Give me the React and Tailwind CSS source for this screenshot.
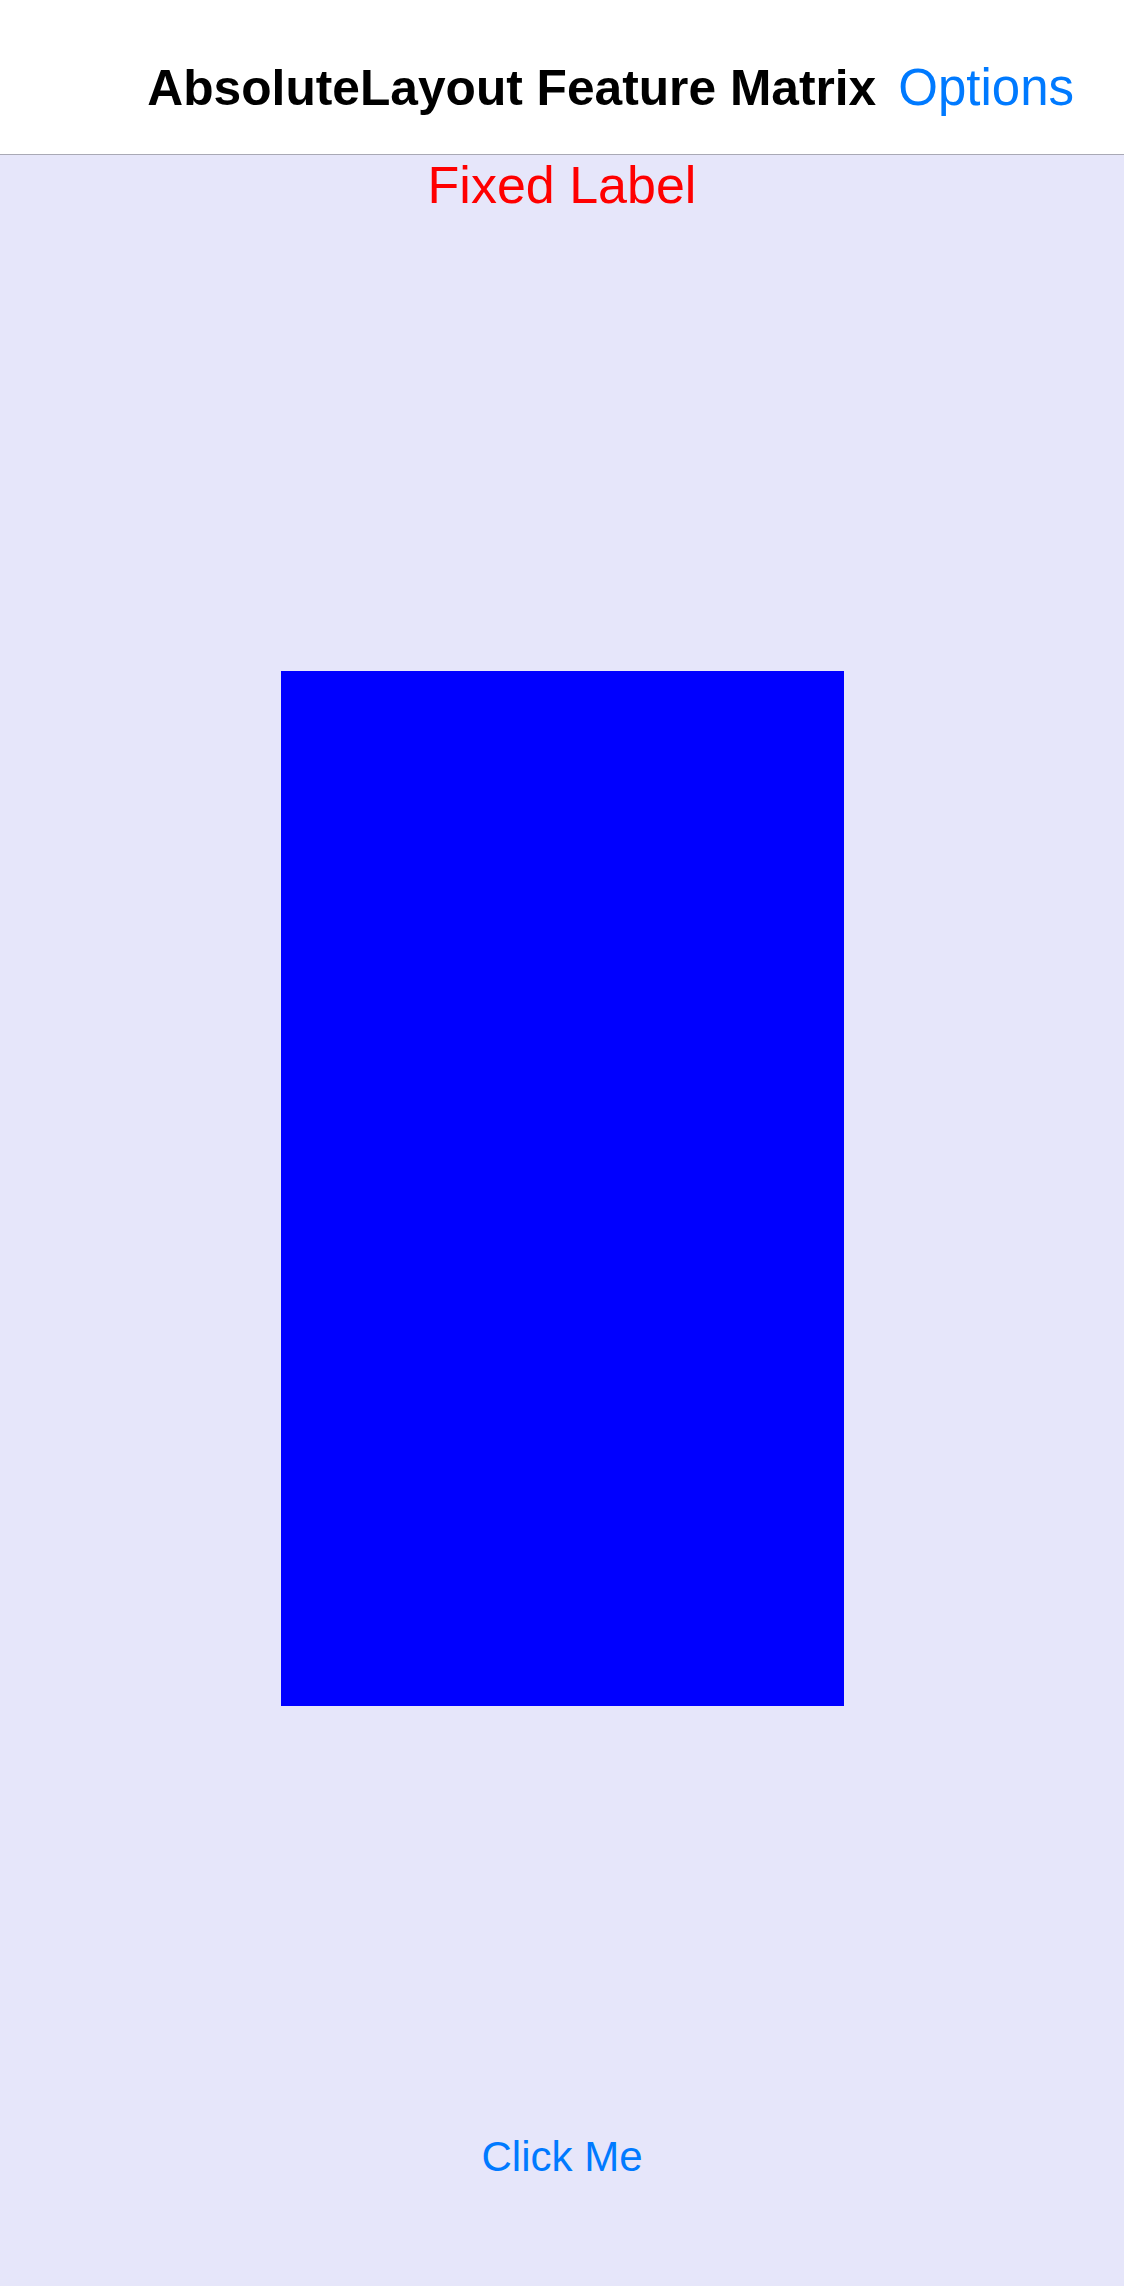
export default function App() {
  return (
    <div
      className="min-h-[2286px] w-full bg-[#E6E6FA] flex flex-col"
      style={{ fontFamily: '"Liberation Sans", Arial, sans-serif' }}
    >
      <header className="h-[155px] bg-white border-b border-[#a9a9b5] flex justify-end items-baseline pt-[62px] pr-[50px] gap-[22px]">
        <span className="text-[49.7px] leading-none font-bold text-black">
          AbsoluteLayout Feature Matrix
        </span>
        <span className="text-[51px] leading-none text-[#007AFF]">Options</span>
      </header>
      <div className="flex flex-col items-center">
        <div className="mt-[4px] text-[52px] leading-none text-[#FF0000]">Fixed Label</div>
        <div className="mt-[460px] w-[563px] h-[1035px] bg-[#0000FF]" />
        <button className="mt-[430px] text-[42px] leading-none text-[#007AFF]">Click Me</button>
      </div>
    </div>
  );
}
